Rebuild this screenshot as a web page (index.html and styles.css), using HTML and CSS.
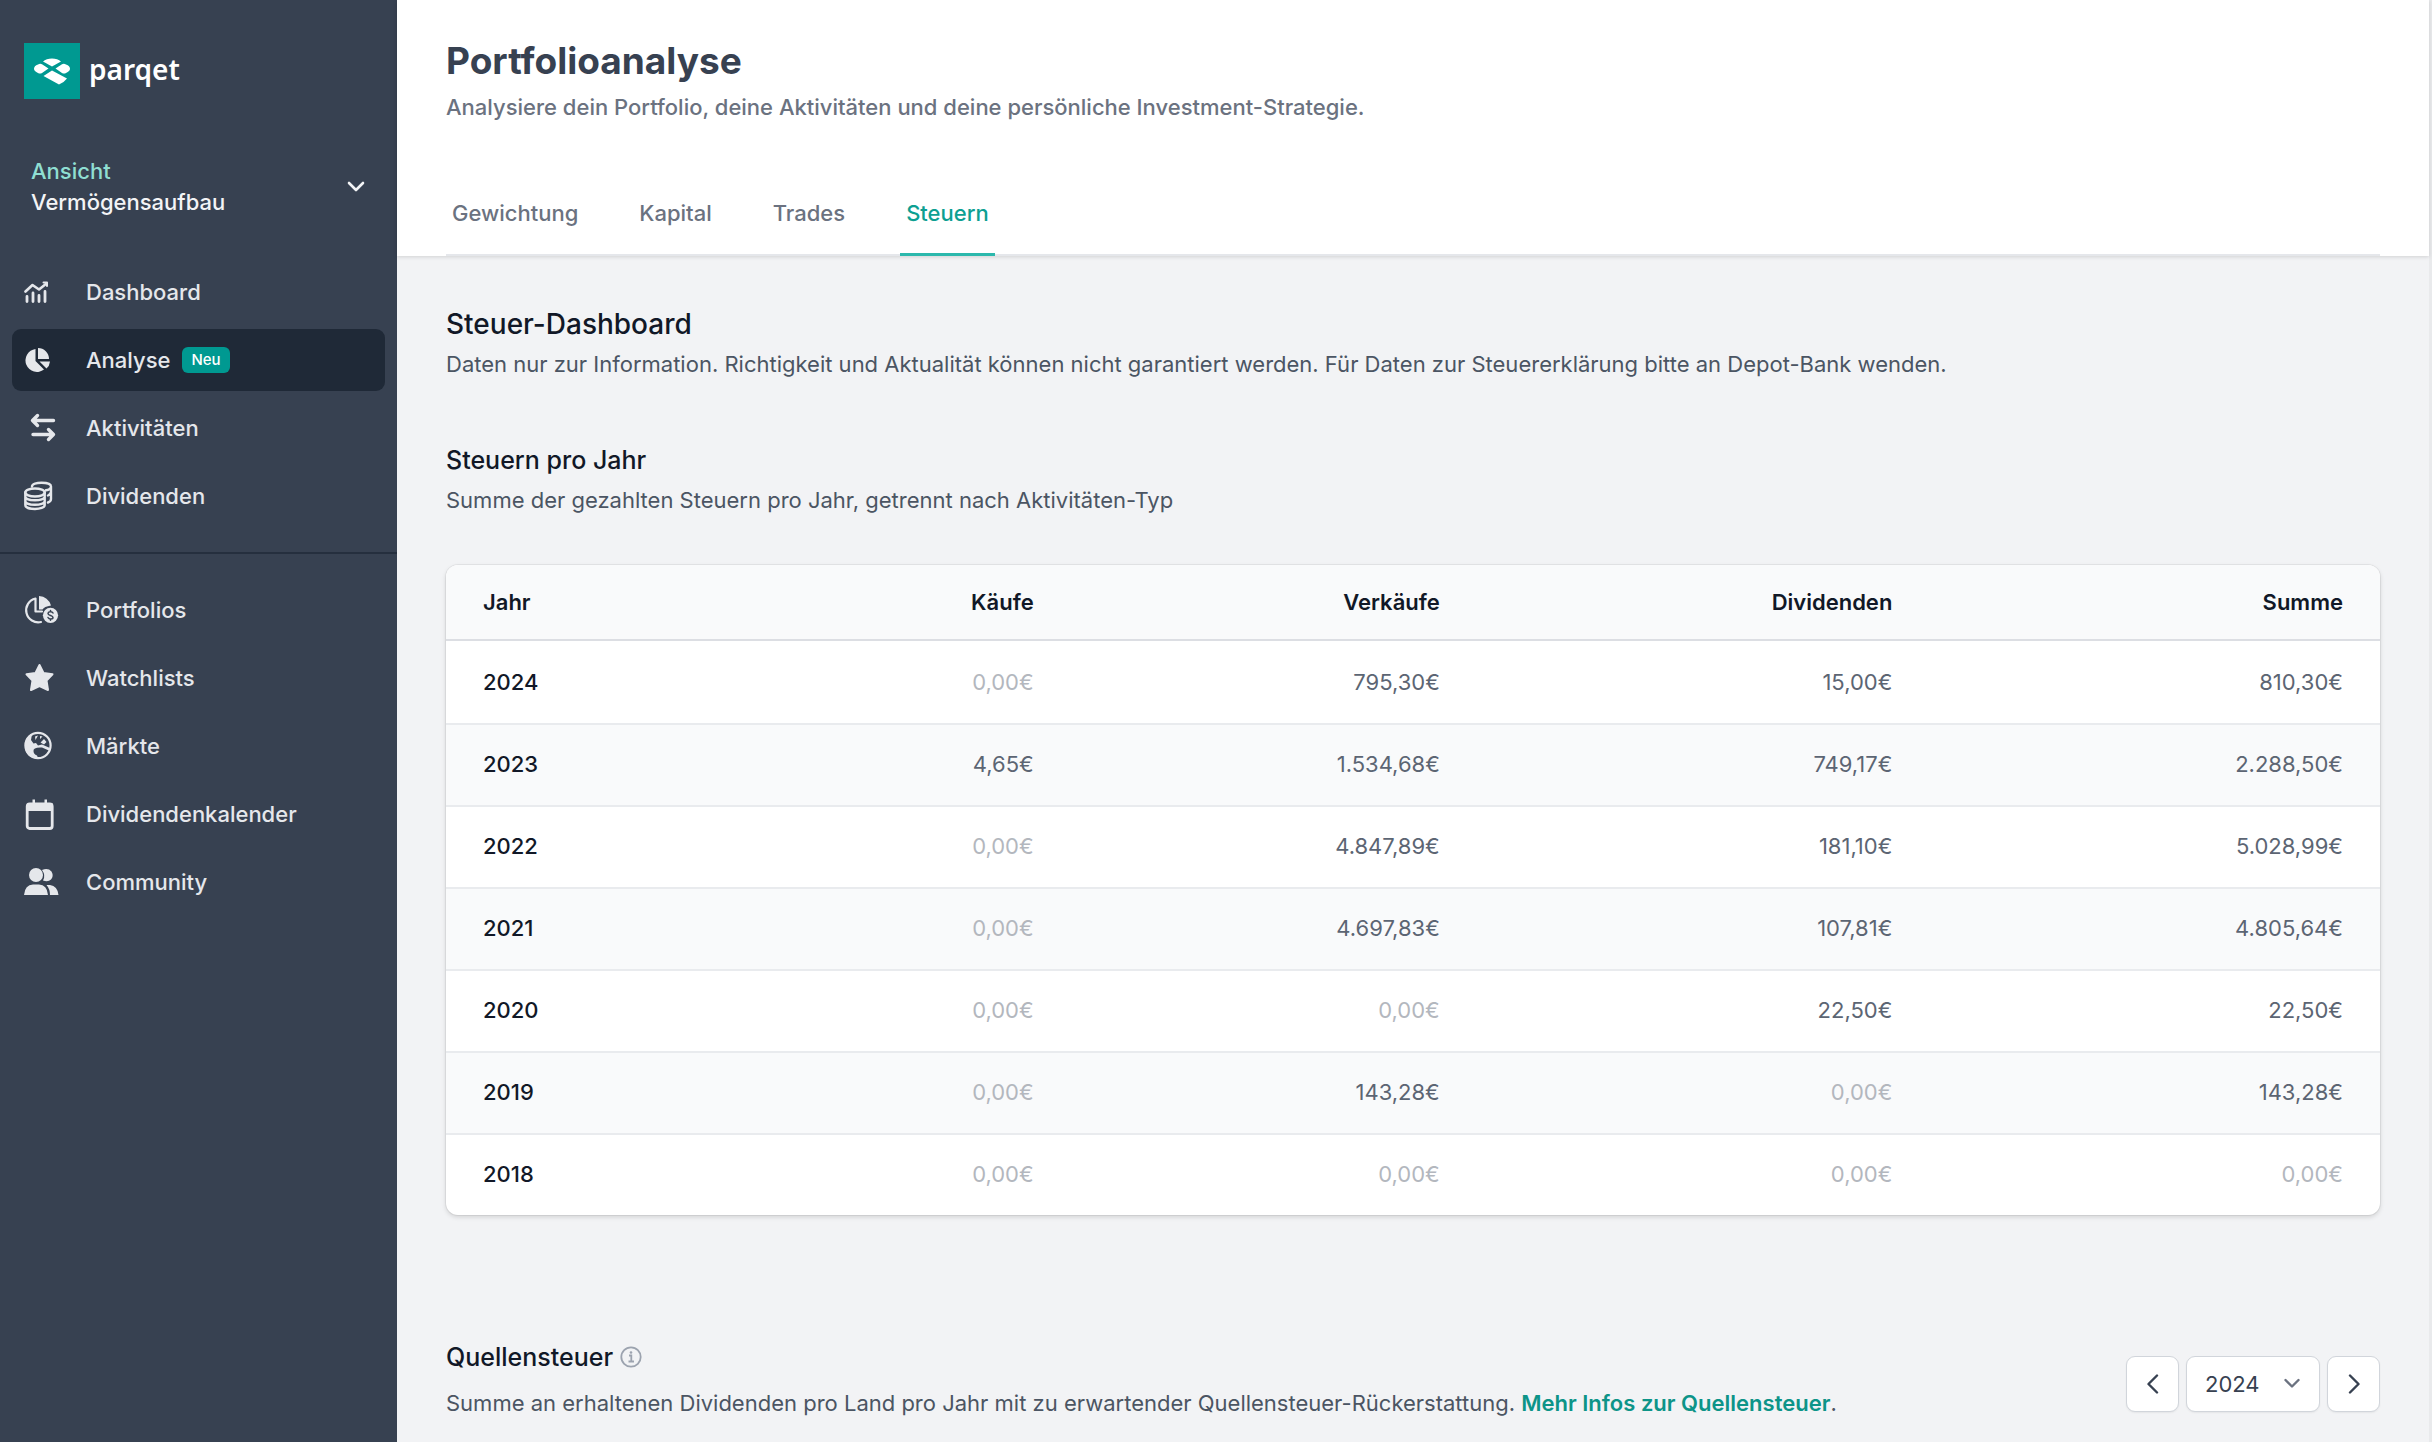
FILE: index.html
```html
<!DOCTYPE html>
<html lang="de">
<head>
<meta charset="utf-8">
<title>Portfolioanalyse – Parqet</title>
<link rel="stylesheet" href="styles.css">
</head>
<body>
<div class="app">
  <aside class="sidebar">
    <a class="brand" href="#">
      <svg class="brand-mark" viewBox="0 0 56 56" aria-hidden="true">
        <rect width="56" height="56" fill="#009991"/>
        <path fill="#fff" d="M19 18.500C23 14.500 33 14.500 37 18.500L28 23.500ZM14 21.500Q16 20 18 21.200L24.500 25.500L18 30Q16 31 14 30Q10 28 10 25.700Q10 23 14 21.500ZM42 21.500Q40 20 38 21.200L31.500 25.500L38 30Q40 31 42 30Q46 28 46 25.700Q46 23 42 21.500ZM28 27.500L43 35.500Q40 39.500 35 41.500L19.500 33Z"/>
      </svg>
      <span class="brand-name">parqet</span>
    </a>
    <button class="view-switch" type="button">
      <span class="view-text"><span class="view-label">Ansicht</span><span>Vermögensaufbau</span></span>
      <svg class="view-chevron" viewBox="0 0 20 20" aria-hidden="true"><path d="M3 6l7 7 7-7" fill="none" stroke="currentColor" stroke-width="2.600" stroke-linecap="round" stroke-linejoin="round"/></svg>
    </button>
    <nav class="nav">
      <a class="nav-item" href="#">
        <svg class="nav-icon" viewBox="0 0 36 36" fill="none" stroke="currentColor" stroke-linecap="round" stroke-linejoin="round" aria-hidden="true"><path stroke-width="2.600" d="M1.500 17.500L8.500 11L15 15.500L22.500 9.500"/><path stroke-width="2" d="M19.500 8.500H23V12"/><path stroke-width="2.800" d="M3 22.500v5M9 19v8.500M15 21.500v6M21 17.500v10"/></svg>
        <span>Dashboard</span>
      </a>
      <a class="nav-item nav-item-active" href="#" aria-current="page">
        <svg class="nav-icon" viewBox="0 0 36 36" fill="currentColor" aria-hidden="true"><path d="M11.500 7V19L20 27.500A11.500 11.500 0 1 1 11.500 7ZM14 6A11 11 0 0 1 25 17H14ZM15.500 19.500H26Q25.500 24 22.500 26.500Z"/></svg>
        <span>Analyse</span><span class="badge">Neu</span>
      </a>
      <a class="nav-item" href="#">
        <svg class="nav-icon" viewBox="0 0 36 36" fill="none" stroke="currentColor" stroke-width="3.400" stroke-linecap="round" stroke-linejoin="round" aria-hidden="true"><path d="M29.500 10.500H9M13.500 5.500L8.500 10.500L13.500 15.500M9 24.500H29.500M24.500 19.500L29.500 24.500L24.500 29.500"/></svg>
        <span>Aktivitäten</span>
      </a>
      <a class="nav-item" href="#">
        <svg class="nav-icon" viewBox="0 0 36 36" fill="none" stroke="currentColor" stroke-width="2.400" stroke-linecap="round" aria-hidden="true"><ellipse cx="11" cy="14.500" rx="9.700" ry="4"/><path d="M1.300 14.500V27C1.300 32.300 20.700 32.300 20.700 27V14.500M1.300 18.500C1.300 23.500 20.700 23.500 20.700 18.500M1.300 23C1.300 28 20.700 28 20.700 23M8 8.500C8 3.500 27 3.500 27 8.500V21Q27 23.500 24 24.500M27 9Q26.500 11.500 22 12.300M27 14Q26.500 16.500 24 17.500"/></svg>
        <span>Dividenden</span>
      </a>
    </nav>
    <nav class="nav nav-more">
      <a class="nav-item" href="#">
        <svg class="nav-icon" viewBox="0 0 36 36" aria-hidden="true"><path fill="none" stroke="currentColor" stroke-width="2.200" stroke-linecap="round" stroke-linejoin="round" d="M17 30A12 12 0 1 1 11.500 6.500V19.500H18"/><path fill="currentColor" d="M15 4Q24 4.500 27 13.500Q20 14.500 18.500 17.500H15Z"/><circle cx="26.500" cy="23.300" r="7.600" fill="currentColor"/><path fill="none" stroke="#374151" stroke-width="1.500" stroke-linecap="round" d="M29 21C28 19 24 19.500 24 21.500C24 24 29 23 29 25.500C29 27.500 25 27.500 24 25.500M26.500 18.500v1M26.500 27v1.200"/></svg>
        <span>Portfolios</span>
      </a>
      <a class="nav-item" href="#">
        <svg class="nav-icon" viewBox="0 0 36 36" fill="currentColor" stroke="currentColor" stroke-width="2" stroke-linejoin="round" aria-hidden="true"><path d="M15.500 5L19.500 13L28.500 14.200L22.500 20.500L24 30L15.500 26L7 30L8.500 20.500L2.500 14.200L11.500 13Z"/></svg>
        <span>Watchlists</span>
      </a>
      <a class="nav-item" href="#">
        <svg class="nav-icon" viewBox="0 0 36 36" aria-hidden="true"><circle cx="14" cy="17.500" r="12.600" fill="none" stroke="currentColor" stroke-width="2.200"/><path fill="currentColor" d="M8 6L7 12L9.500 15.500L12 15L14 17.500L18 16.500L26 20V23L18 19.500Q9 19 9.500 23Q9.500 26 13 27.500L14.500 31Q1 30 1 17.500Q1 9 8 6ZM20 11L22.500 14L20 16.500L16.500 14.500ZM11 8.500L14 7.500L11.500 12ZM16 8L18.500 8.500L16 11Z"/></svg>
        <span>Märkte</span>
      </a>
      <a class="nav-item" href="#">
        <svg class="nav-icon" viewBox="0 0 36 36" aria-hidden="true"><rect x="3.200" y="8" width="25" height="24.500" rx="2.500" fill="none" stroke="currentColor" stroke-width="2.800"/><path fill="currentColor" d="M3 7.500H29V15H3ZM8.500 3.500H11V9H8.500ZM20.500 3.500H23V9H20.500Z"/></svg>
        <span>Dividendenkalender</span>
      </a>
      <a class="nav-item" href="#">
        <svg class="nav-icon" viewBox="0 0 36 36" fill="currentColor" aria-hidden="true"><circle cx="12" cy="11" r="7"/><path d="M0 31Q1 20.500 9 20.500H15Q23 20.500 24 31ZM18 6Q24 3.500 27.500 7.500Q30 12 27 15.500Q24 18.500 19 16.500Q22 11.500 18 6ZM22.500 21H26Q33.500 22 34.500 31H26Q26 25 22.500 21Z"/></svg>
        <span>Community</span>
      </a>
    </nav>
  </aside>

  <main class="main">
    <header class="page-head">
      <h1 class="page-title">Portfolioanalyse</h1>
      <p class="page-sub">Analysiere dein Portfolio, deine Aktivitäten und deine persönliche Investment-Strategie.</p>
      <nav class="tabs">
        <a class="tab" href="#">Gewichtung</a>
        <a class="tab" href="#">Kapital</a>
        <a class="tab" href="#">Trades</a>
        <a class="tab tab-active" href="#" aria-current="page">Steuern</a>
      </nav>
    </header>

    <div class="content">
      <section class="intro">
        <h2 class="h-large">Steuer-Dashboard</h2>
        <p class="text">Daten nur zur Information. Richtigkeit und Aktualität können nicht garantiert werden. Für Daten zur Steuererklärung bitte an Depot-Bank wenden.</p>
      </section>

      <section class="taxes">
        <h3 class="h-small">Steuern pro Jahr</h3>
        <p class="text">Summe der gezahlten Steuern pro Jahr, getrennt nach Aktivitäten-Typ</p>
        <div class="card">
          <table class="table">
            <colgroup><col class="col-year"><col class="col-buy"><col class="col-sell"><col class="col-div"><col class="col-sum"></colgroup>
            <thead>
              <tr><th scope="col">Jahr</th><th scope="col">Käufe</th><th scope="col">Verkäufe</th><th scope="col">Dividenden</th><th scope="col">Summe</th></tr>
            </thead>
            <tbody>
              <tr><th scope="row">2024</th><td class="zero">0,00€</td><td>795,30€</td><td>15,00€</td><td>810,30€</td></tr>
              <tr><th scope="row">2023</th><td>4,65€</td><td>1.534,68€</td><td>749,17€</td><td>2.288,50€</td></tr>
              <tr><th scope="row">2022</th><td class="zero">0,00€</td><td>4.847,89€</td><td>181,10€</td><td>5.028,99€</td></tr>
              <tr><th scope="row">2021</th><td class="zero">0,00€</td><td>4.697,83€</td><td>107,81€</td><td>4.805,64€</td></tr>
              <tr><th scope="row">2020</th><td class="zero">0,00€</td><td class="zero">0,00€</td><td>22,50€</td><td>22,50€</td></tr>
              <tr><th scope="row">2019</th><td class="zero">0,00€</td><td>143,28€</td><td class="zero">0,00€</td><td>143,28€</td></tr>
              <tr><th scope="row">2018</th><td class="zero">0,00€</td><td class="zero">0,00€</td><td class="zero">0,00€</td><td class="zero">0,00€</td></tr>
            </tbody>
          </table>
        </div>
      </section>

      <section class="withholding">
        <div>
          <h3 class="h-small h-info">Quellensteuer
            <svg class="info-icon" viewBox="0 0 22 22" fill="none" stroke="currentColor" aria-hidden="true"><circle cx="11" cy="11" r="9.700" stroke-width="1.800"/><path stroke-width="1.800" d="M9 9.500H11.300V15.500M8.500 15.500H14"/><circle cx="11" cy="6.500" r="1.300" fill="currentColor" stroke="none"/></svg>
          </h3>
          <p class="text text-wide">Summe an erhaltenen Dividenden pro Land pro Jahr mit zu erwartender Quellensteuer-Rückerstattung. <a class="more" href="#">Mehr Infos zur Quellensteuer</a>.</p>
        </div>
        <div class="year-picker">
          <button class="step" type="button" aria-label="Vorheriges Jahr"><svg class="step-icon" viewBox="0 0 20 20" aria-hidden="true"><path d="M14 1.500L5.500 10l8.500 8.500"/></svg></button>
          <div class="year">
            <select class="year-select" aria-label="Jahr"><option>2024</option><option>2023</option><option>2022</option></select>
            <svg class="year-chevron" viewBox="0 0 20 20" aria-hidden="true"><path d="M3.500 7l6.500 6.500L16.500 7"/></svg>
          </div>
          <button class="step" type="button" aria-label="Nächstes Jahr"><svg class="step-icon" viewBox="0 0 20 20" aria-hidden="true"><path d="M6 1.500l8.500 8.500L6 18.500"/></svg></button>
        </div>
      </section>
    </div>
  </main>
</div>
</body>
</html>
```
FILE: styles.css
```css
*, *::before, *::after { box-sizing: border-box; }

body {
  margin: 0;
  font-family: Inter, "Liberation Sans", sans-serif;
  font-size: 22px;
  line-height: 32px;
  color: #4b5563;
  background: #f2f3f5;
}

h1, h2, h3, p { margin: 0; }
a { color: inherit; text-decoration: none; }
button, select { font: inherit; color: inherit; }

.app { display: flex; min-height: 100vh; }

/* Sidebar */
.sidebar {
  flex: 0 0 397px;
  background: #374151;
  color: #e5e7eb;
  font-weight: 500;
}
.brand {
  display: flex;
  align-items: center;
  gap: 9px;
  padding: 43px 24px 0;
}
.brand-mark { width: 56px; height: 56px; }
.brand-name {
  padding-bottom: 4px;
  font-family: "Noto Sans", sans-serif;
  font-size: 28px;
  font-weight: 600;
  color: #fff;
}
.view-switch {
  display: flex;
  align-items: center;
  justify-content: space-between;
  width: 100%;
  margin-top: 57px;
  padding: 0 31px;
  border: 0;
  background: none;
  color: #f3f4f6;
  font-weight: 500;
  line-height: 31px;
  text-align: left;
}
.view-text { display: flex; flex-direction: column; }
.view-label { color: #8fded2; }
.view-chevron { width: 20px; height: 20px; }

.nav {
  display: flex;
  flex-direction: column;
  gap: 6px;
  padding: 43px 12px 25px;
}
.nav-more {
  padding-top: 25px;
  border-top: 2px solid #252f3e;
}
.nav-item {
  display: flex;
  align-items: center;
  height: 62px;
  padding-left: 12px;
  border-radius: 9px;
}
.nav-item-active { background: #1f2937; }
.nav-icon { width: 36px; height: 36px; margin-right: 26px; }
.badge {
  margin-left: 12px;
  padding: 0 9px;
  border-radius: 6px;
  background: #009991;
  color: #fff;
  font-size: 15px;
  line-height: 26px;
}

/* Page header */
.main {
  flex: 1;
  min-width: 0;
  border-right: 3px solid #e9eaec;
}
.page-head {
  padding: 36px 49px 0;
  background: #fff;
  box-shadow: 0 1px 4px rgba(0, 0, 0, 0.14);
}
.page-title {
  font-size: 37px;
  font-weight: 700;
  line-height: 50px;
  color: #374151;
}
.page-sub {
  margin-top: 5px;
  font-weight: 500;
  color: #6b7280;
}
.tabs {
  display: flex;
  gap: 49px;
  margin-top: 47px;
  border-bottom: 2px solid #e5e7eb;
}
.tab {
  margin-bottom: -2px;
  padding: 27px 6px 24px;
  border-bottom: 3px solid transparent;
  font-weight: 500;
  color: #6b7280;
}
.tab-active { color: #0d9f92; border-color: #2bb8ac; }

/* Content */
.content { padding: 50px 49px 0; }
.h-large {
  font-size: 28px;
  font-weight: 500;
  line-height: 36px;
  color: #111827;
}
.h-small {
  font-size: 25px;
  font-weight: 500;
  line-height: 36px;
  color: #111827;
}
.text { margin-top: 6px; }
.taxes { margin-top: 62px; }

.card {
  margin-top: 49px;
  overflow: hidden;
  border-radius: 12px;
  background: #fff;
  box-shadow: 0 0 0 1px rgba(0, 0, 0, 0.05), 0 2px 5px rgba(0, 0, 0, 0.14);
}
.table {
  width: 100%;
  border-collapse: separate;
  border-spacing: 0;
  table-layout: fixed;
  text-align: right;
}
.col-year { width: 12%; }
.col-buy { width: 20.3%; }
.col-sell { width: 21%; }
.col-div { width: 23.4%; }
.col-sum { width: 23.3%; }
.table th, .table td { padding: 25px 37px; }
.table td { color: #5c6573; }
.table th { color: #111827; }
.table th:first-child { text-align: left; }
.table thead th {
  padding: 21px 37px;
  border-bottom: 2px solid #dcdee3;
  background: #f9fafb;
  font-weight: 600;
}
.table tbody th { font-weight: 500; }
.table tbody tr:nth-child(even) { background: #f9fafb; }
.table tbody tr + tr > * {
  padding-top: 23px;
  border-top: 2px solid #e9ebee;
}
.table .zero { color: #b3b7be; }

.withholding {
  display: flex;
  justify-content: space-between;
  align-items: flex-end;
  margin-top: 124px;
  padding-bottom: 22px;
}
.h-info { display: flex; align-items: center; gap: 7px; }
.info-icon { width: 22px; height: 22px; color: #9ca3af; }
.text-wide { margin-top: 12px; }
.more { font-weight: 600; color: #0d9488; }

.year-picker { display: flex; gap: 7px; padding-bottom: 7px; }
.step, .year-select {
  height: 56px;
  border: 1px solid #d1d5db;
  border-radius: 9px;
  background: #fff;
  color: #374151;
  box-shadow: 0 1px 2px rgba(0, 0, 0, 0.06);
}
.step {
  display: flex;
  align-items: center;
  justify-content: center;
  width: 53px;
  padding: 0;
}
.step-icon, .year-chevron {
  width: 20px;
  height: 20px;
  fill: none;
  stroke: currentColor;
  stroke-width: 2.4;
  stroke-linecap: round;
  stroke-linejoin: round;
}
.year { position: relative; }
.year-select {
  width: 134px;
  padding: 0 18px;
  appearance: none;
}
.year-chevron {
  position: absolute;
  top: 17px;
  right: 18px;
  color: #6b7280;
  pointer-events: none;
}
```
